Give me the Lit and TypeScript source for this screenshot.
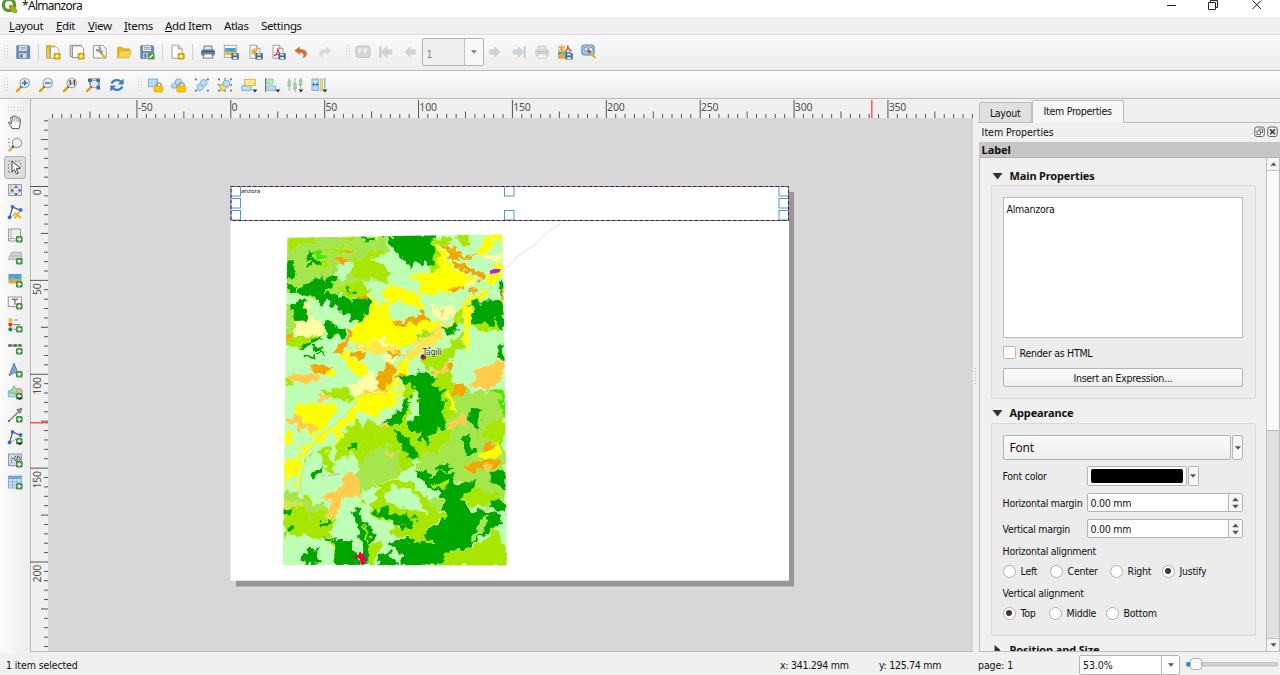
import { LitElement, html, svg, css, type TemplateResult } from "lit";
import { customElement, property } from "lit/decorators.js";

const plus = svg`<rect x="9" y="9" width="6.6" height="6.6" rx="1.6" fill="#3f8f3f"/><path d="M12.3 10.4v3.8M10.4 12.3h3.8" stroke="#fff" stroke-width="1.5"/>`;
const star = svg`<rect x="8.6" y="9" width="7" height="6.6" rx="1.4" fill="#c9a400"/><path d="M12.1 10v4.6M9.8 12.3h4.6M10.6 10.8l3 3M13.6 10.8l-3 3" stroke="#fff7b0" stroke-width=".9"/>`;
const disk = svg`<rect x="8.4" y="9" width="7.4" height="6.6" rx="1.2" fill="#456a86"/><path d="M10.2 9.5h3.6v2h-3.6zM10.2 15v-2h3.8v2" fill="#d5e2ec"/>`;
const drop = svg`<path d="M11.4 12.6h5L13.9 15.6z" fill="#333"/>`;
const sheet = svg`<path d="M3 1.2h6.5L13 4.7v9.6H3z" fill="#fdfdfd" stroke="#8c8c8c" stroke-width=".8"/><path d="M9.3 1.3v3.6H13" fill="#ddd" stroke="#8c8c8c" stroke-width=".8"/>`;
const lens = svg`<path d="M6.4 9.6L2 14.2" stroke="#d9a514" stroke-width="2.4" stroke-linecap="round"/><path d="M7 9l-1.2 1.2" stroke="#333" stroke-width="2"/><circle cx="9.8" cy="6" r="4.7" fill="#e9edf0" stroke="#9a9fa5" stroke-width="1.1"/>`;
const floppy = svg`<path d="M1.8 1.8h12l.8.8v11.8H1.8z" fill="#6a90ba" stroke="#54759a" stroke-width=".8"/><rect x="4" y="2" width="8" height="5" fill="#dfe5ea"/><path d="M5 3.6h6M5 5.2h6" stroke="#8c959c" stroke-width=".8"/><rect x="4.2" y="9.2" width="7.6" height="5" fill="#ced6dd"/><rect x="5.4" y="10.2" width="2" height="3.4" fill="#47698f"/>`;
const lock = svg`<path d="M9 9.3V7.6a2.7 2.7 0 0 1 5.2 0v1.7" fill="none" stroke="#999" stroke-width="1.5"/><rect x="7" y="9" width="8.6" height="6" rx=".8" fill="#f5c800" stroke="#d6a800" stroke-width=".7"/>`;
const polyline = svg`<path d="M2.6 13.6L5.6 3l8 3.4" fill="none" stroke="#555" stroke-width="1.2"/><path d="M3.6 13l9-5" stroke="#777" stroke-dasharray="1.4 1"/><circle cx="2.5" cy="13.4" r="1.9" fill="#2a6fe0"/><circle cx="5.6" cy="2.8" r="1.9" fill="#2a6fe0"/><circle cx="13.6" cy="6" r="1.9" fill="#2a6fe0"/>`;
const corners = svg`<path d="M1 1.5h1.8v1.8H1zM13 1.500h1.8v1.8H13zM1 12.800h1.8v1.8H1zM13 12.800h1.8v1.8H13z" fill="#666"/>`;
const printer = (a: string, b: string) => svg`<path d="M4 2h8v5H4z" fill="#e4e4e4" stroke="${b}" stroke-width=".7"/><rect x="1" y="5.6" width="14" height="6.2" rx="2" fill="${a}"/><path d="M2.6 7.4h10.800" stroke="${b}"/><path d="M4 9.8h8l.8 4.4H3.2z" fill="#f4f4f4" stroke="${b}" stroke-width=".7"/>`;
const image = svg`<rect x="1.5" y="2" width="13" height="6" fill="#46a5e8"/><path d="M1.5 8l4-2.4 4 1.6 5-.8v5.200h-13z" fill="#cfae4e"/>`;

const icons: Record<string, TemplateResult | ReturnType<typeof svg>> = {
  save: floppy,
  newLayout: svg`<path d="M1.5 1.5h4.6v12.6H1.5z" fill="#edc84f" stroke="#bf9a20" stroke-width=".8"/><path d="M4 4h2M4 6.4h2M4 8.8h2" stroke="#8b6c10" stroke-width=".8"/><path d="M5.6 2.6h5.2L14 5.8v8.4H5.6z" fill="#fafafa" stroke="#999" stroke-width=".8"/><path d="M2 2.5h8" stroke="#dcb42e" stroke-width="2"/>${star}`,
  duplicate: svg`<path d="M1.2 1.4h11v11h-11z" fill="#ddd" stroke="#8c8c8c" stroke-width=".9"/><path d="M3.4 1.8h8.2l3 3v8.8H3.4z" fill="#fbfbfb" stroke="#858585" stroke-width=".9"/>${star}`,
  manager: svg`<path d="M1.4 1.6h9.8l3 3v9.4H1.4z" fill="#f6f6f6" stroke="#909090" stroke-width=".9"/><path d="M8 8l5.6 6" stroke="#dfb633" stroke-width="2.3"/><path d="M4 5.400c.4 1.600 1.600 2.400 3 2L9.600 9l1-1-1.800-2.400c.4-1.600-.6-2.600-2-2.800l.6 1.800L6 6z" fill="#aaa" stroke="#777" stroke-width=".7"/>`,
  folder: svg`<path d="M1.6 13.4V3.4h4.6l1.3 1.4h5.7v2" fill="#e2b220" stroke="#d1a010" stroke-width=".7"/><path d="M1.6 13.8L4 6.6h11.2L13 13.8z" fill="#f7d24c" stroke="#d9ab1c" stroke-width=".7"/>`,
  saveTemplate: svg`${floppy}<rect x="8.8" y="9" width="6.8" height="6.6" rx="1.2" fill="#4a9a55"/><path d="M10.4 14l3.6-3.6" stroke="#e6f5e6" stroke-width="1.4"/>`,
  addPage: svg`${sheet}${star}`,
  print: printer("#5f7f9f", "#47586a"),
  exportImage: svg`<g><rect x="1.300" y="1.300" width="12.400" height="12" fill="#fafafa" stroke="#999" stroke-width=".8"/><rect x="2.200" y="4" width="10.600" height="4" fill="#46a0dd"/><path d="M2.200 8.500l3-2 3 1.500 4.600-.8v4H2.200z" fill="#e0bb3e"/></g>${disk}`,
  exportSvg: svg`${sheet}<path d="M7.500 4v7.400M4.300 5.800l6.400 3.800M10.700 5.800l-6.400 3.800" stroke="#f29a1f" stroke-width="1.4"/>${disk}`,
  exportPdf: svg`${sheet}<path d="M3.6 12c3-1.400 4.600-4 4.200-8 .2 4 1.600 6 4.600 6.200-3-.6-6 .2-8.800 1.800z" fill="none" stroke="#e0322c" stroke-width="1.100"/>${disk}`,
  undo: svg`<path d="M1.500 6.600L6.800 2.400v2.800c5 0 7.400 2 7 5-.3 2.400-2.400 3.600-4.600 4 2.200-2 2-5.600-2.400-5.800v2.600z" fill="#e2672b"/>`,
  redo: svg`<path d="M14.500 6.600L9.200 2.400v2.800c-5 0-7.400 2-7 5 .3 2.400 2.400 3.600 4.600 4-2.200-2-2-5.600 2.400-5.800v2.600z" fill="#dadcdc"/>`,
  atlas: svg`<rect x="1" y="2" width="14" height="11.600" rx="2.600" fill="#d6d6d6" stroke="#c2c2c2"/><path d="M3 5l3-1.200 1 2-2 2.400v2.600L3.400 8zM8 5l3-1.200 2 1.600-1.600 2-1 3.600-1.600-3z" fill="#f0f0f0"/>`,
  first: svg`<path d="M1.500 2.500h1.500v11H1.500zM3.400 8l5.400-5.400v3.400h5v4h-5v3.400z" fill="#cfd3d5" stroke="#cfd3d5"/>`,
  prev: svg`<path d="M2.600 8l6-5.400v3.200h4.800v4.400H8.600v3.200z" fill="#cfd3d5" stroke="#cfd3d5" stroke-width=".6"/>`,
  next: svg`<path d="M13.400 8l-6-5.400v3.200H2.600v4.400h4.800v3.200z" fill="#cfd3d5" stroke="#cfd3d5" stroke-width=".6"/>`,
  last: svg`<path d="M14.500 2.500H13v11h1.500zM12.600 8L7.200 2.600v3.400h-5v4h5v3.400z" fill="#cfd3d5" stroke="#cfd3d5"/>`,
  printOff: printer("#d0d2d3", "#c2c4c5"),
  exportAtlas: svg`<rect x="1" y="7.600" width="13" height="6.600" fill="#49a0dd"/><path d="M1 11l5-2 8 2v3.600H1z" fill="#d6ad35"/><path d="M4.600 1v7M1.400 2.400l6.400 4.400M7.800 2.400L1.400 6.800" stroke="#f6a01e" stroke-width="1.500"/><path d="M8 8c2-1.600 3-4 2.600-6.600.4 3 1.400 4.800 4 5.400" fill="none" stroke="#ea4630" stroke-width="1.300"/>${disk}`,
  atlasSettings: svg`<rect x=".8" y="1" width="12.400" height="10" rx="2" fill="#a9c2e0" stroke="#6c87aa"/><path d="M3 4l2.600-.8 1 2-1.600 2.600zM8 4l3-.6.6 2-2 2.600z" fill="#fff" stroke="#54789c" stroke-width=".6"/><path d="M9 8l5.400 6" stroke="#dcb43a" stroke-width="2.400"/><path d="M6.600 6.400l2.800 2.400" stroke="#555" stroke-width="1.600"/>`,
  zoomIn: svg`${lens}<path d="M9.800 3.200v5.600M7 6h5.600" stroke="#356fb0" stroke-width="1.500"/>`,
  zoomOut: svg`${lens}<path d="M7 6h5.600" stroke="#356fb0" stroke-width="1.500"/>`,
  zoomActual: svg`${lens}<path d="M7.200 4.200l1-.5v4.600M11.400 4.200l1-.5v4.600M9.900 4.800v.8M9.900 6.600v.8" stroke="#333" fill="none" stroke-width="1.100"/>`,
  zoomFull: svg`${lens}<path d="M3 1.500h3.800v3.600H3zM11.400 1.500H15v3.600h-3.600zM11.400 8.800H15v3.600h-3.600z" fill="#3d6fa8"/><path d="M6 3.200h6M13.200 4v6M5 4v4" stroke="#3d6fa8" stroke-width=".8"/>`,
  refresh: svg`<path d="M2.600 6.600C4 2.800 9.400 1.800 12 4.800" fill="none" stroke="#3c7cc4" stroke-width="2.200"/><path d="M14.600 1.400v6H8.800z" fill="#3c7cc4"/><path d="M13.400 9.400C12 13.200 6.600 14.200 4 11.200" fill="none" stroke="#3c7cc4" stroke-width="2.200"/><path d="M1.400 14.600v-6h5.800z" fill="#3c7cc4"/>`,
  lock: svg`<rect x="1.500" y="2" width="9" height="7.600" fill="#b9dbf5" stroke="#7db0d6"/>${lock}`,
  unlock: svg`<path d="M1.500 8l3-3 2 3v3H2z" fill="#b9dbf5" stroke="#7db0d6"/><circle cx="8.500" cy="5" r="3.200" fill="#b9dbf5" stroke="#7db0d6"/>${lock}`,
  group: svg`<path d="M3 8.600L6 6.400l4 4-2.600 3H4z" fill="#b9dbf5" stroke="#7db0d6"/><circle cx="9.800" cy="5.800" r="3.300" fill="#b9dbf5" stroke="#7db0d6"/>${corners}`,
  ungroup: svg`<path d="M3 8.600L6 6.400l4 4-2.600 3H4z" fill="#f4e66c" stroke="#b9a622"/><circle cx="9.400" cy="6.600" r="3.500" fill="#b9dbf5" stroke="#7db0d6"/>${corners}<path d="M8 1v1.600M1 8h1.600M13.400 8h1.600M8 13.200v1.600" stroke="#666" stroke-width="1.400"/>`,
  raise: svg`<rect x="1" y="8.600" width="9" height="5" fill="#b9dbf5" stroke="#7db0d6"/><rect x="3.600" y="2.400" width="10.600" height="6.200" fill="#f6ea85" stroke="#cdbd5c"/>${drop}`,
  align: svg`<path d="M1.500 1v14" stroke="#777"/><rect x="2.600" y="2" width="6.400" height="5" fill="#b6efb8" stroke="#85c888" stroke-width=".8"/><rect x="2.600" y="9" width="9" height="4.400" fill="#b9dbf5" stroke="#7db0d6" stroke-width=".8"/>${drop}`,
  distribute: svg`<path d="M2.200 1v13M8 1v14M13.600 1v11" stroke="#8a9a8f" stroke-width=".8"/><path d="M1 4h2.400v5H1zM6.800 6.500h2.400v5.500H6.800zM12.400 3h2.400v5h-2.400z" fill="#a8e2b0" stroke="#74b87f" stroke-width=".7"/>${drop}`,
  resize: svg`<rect x="1" y="2" width="6.400" height="11.400" fill="#b9dbf5" stroke="#7db0d6"/><path d="M1.600 7.600h5.600M2.600 6v3.200M6.200 6v3.200" stroke="#2c6da3" stroke-width=".9"/><rect x="9.200" y="2" width="2.400" height="11.400" fill="#f4e66c" stroke="#cdbd5c" stroke-width=".8"/><path d="M13.800 1v11" stroke="#7db0d6" stroke-width="1.300"/>${drop}`,
  pan: svg`<path d="M5 14.600c-.4-2-3-4.400-3.600-6.200 1-.8 2 .2 3 1.600L3.800 3.600c1-.8 1.700-.2 2 .8V2.200c.8-1 1.800-.6 2 .4 1-.8 1.800-.2 2 .8.9-.6 1.800 0 1.900 1 1.100-.4 1.700.4 1.700 1.400-.1 3-.5 6-1.400 8.800z" fill="#fff" stroke="#444" stroke-width=".9"/><path d="M5.800 4.400v3.400M7.900 3v4.600M9.900 4v3.800M11.700 5v3" stroke="#666" stroke-width=".7"/>`,
  zoom: svg`<path d="M1 2h3M1 5.500h3M1.500 9h2" stroke="#888" stroke-width="1.200" stroke-dasharray="1.400 1.200" fill="none"/><path d="M6 9.800L1.800 14.200" stroke="#dfa52c" stroke-width="2.200"/><path d="M6.600 9L5.400 10.400" stroke="#222" stroke-width="2.200"/><circle cx="10" cy="5.800" r="4.600" fill="#eee" stroke="#999" stroke-width="1.100"/>`,
  select: svg`<path d="M1.500 2h4M1.500 5v8M8 2h6M13.600 4v6M2 13.600h4" stroke="#888" stroke-dasharray="1.600 1.600" fill="none"/><path d="M5 2l8.200 7.400-4 .4 2 4.400-1.800.8-2-4.400L5 13z" fill="#fff" stroke="#333" stroke-width=".9"/>`,
  moveContent: svg`<path d="M1.500 2.500h13v11h-13z" fill="#e6e6e6" stroke="#999"/><path d="M4 2v10" stroke="#aaa"/><path d="M9 3l2.200 2.800H6.800zM9 14l2.200-2.800H6.800zM3.600 8.500l2.800-2.200v4.400zM14.400 8.500l-2.800-2.200v4.400z" fill="#3c6da4"/>`,
  editNodes: svg`${polyline}<path d="M7 9l7 5" stroke="#f1b400" stroke-width="2"/><path d="M12 8.500l-4.500 6" stroke="#f1b400" stroke-width="1.600"/>`,
  addMap: svg`<path d="M1.500 2h12v12h-12z" fill="#eee" stroke="#9a9a9a"/><path d="M4 2v9.600H1.800M4 11.600h9" fill="none" stroke="#aaa"/>${plus}`,
  add3d: svg`<path d="M4.600 3.500c3-1.600 6 1 9.400-.6L15 11.400c-4 1-8.600-1.800-13.800-.8z" fill="#d8d8d8" stroke="#a5a5a5" stroke-width=".8"/><path d="M3.400 7h10.800M7.200 3.400L6 10.600M11 3.600v8" stroke="#b4b4b4" stroke-width=".8"/>${plus}`,
  addImage: svg`${image}${plus}`,
  addLabel: svg`<rect x="1.300" y="3" width="13.200" height="9.600" fill="#f4f4f4" stroke="#9a9a9a"/><path d="M5 5.400h5.800M7.900 5.400v5.400" stroke="#666" stroke-width="1.200"/>${plus}`,
  addLegend: svg`<circle cx="3.400" cy="3" r="2.100" fill="#ffc400"/><circle cx="3.400" cy="7.600" r="2.100" fill="#e83c2a"/><circle cx="3.400" cy="12.400" r="2.100" fill="#1f8c4c"/><path d="M6.800 3h4M6.800 7.600h6.800M6.800 12.400h3" stroke="#888" stroke-width="1.200"/>${plus}`,
  addScale: svg`<path d="M1 6.500h14" stroke="#a0a0a0" stroke-width="2.800"/><path d="M1.600 6.500H4.400M7 6.500h2.600M12 6.500h2.200" stroke="#555" stroke-width="1.800"/>${plus}`,
  addNorth: svg`<path d="M7 1.200l5 12.400-4.600-3L2 13.800z" fill="#79a8d0" stroke="#3e6d98" stroke-width=".8"/>${plus}`,
  addShape: svg`<rect x="1.400" y="6.800" width="8" height="6" fill="#b9dbf5" stroke="#7db0d6"/><circle cx="11.600" cy="8" r="3.600" fill="#f5b4aa" stroke="#d87467" stroke-width=".9"/><path d="M7 1.800l4.600 7.400H2.600z" fill="#a7e0a4" stroke="#6fb874" stroke-width=".9"/>${plus}<path d="M10 13.600h5.600l-2.800 2.400z" fill="#222"/>`,
  addArrow: svg`<path d="M2 14L12.400 4" stroke="#777" stroke-width="1.200"/><path d="M14.800 1.200l-1.600 5.200-3.400-3.600z" fill="#999" stroke="#555" stroke-width=".7"/><circle cx="2" cy="14" r="1" fill="#444"/>${plus}`,
  addNode: svg`${polyline}${plus}<path d="M10 13.600h5.600l-2.800 2.400z" fill="#222"/>`,
  addHtml: svg`<rect x="1.500" y="2" width="13" height="11.600" fill="#cfd8e2" stroke="#8997a8"/><path d="M4.500 4.500v7M4 6.500h4" stroke="#8fa1b6"/><path d="M8.800 4L7 6.600l1.800 2.600M11.600 4l1.800 2.600-1.800 2.600M10.800 3.600L9.400 9.800" fill="none" stroke="#444" stroke-width=".9"/>${plus}`,
  addTable: svg`<rect x="1.500" y="2" width="13" height="12" fill="#d0e3f5" stroke="#83afd6"/><path d="M1.500 2h13v3h-13z" fill="#6fa5da"/><path d="M1.500 8h13M1.500 11h13M5.600 5v9M10 5v9" stroke="#83afd6" stroke-width=".9"/>${plus}`,
};

@customElement("tool-icon")
export class ToolIcon extends LitElement {
  @property() name = "";
  static styles = css`
    :host { display: flex; width: 16px; height: 16px; flex: none; }
    svg { width: 16px; height: 16px; display: block; overflow: visible; }
  `;
  render() {
    return html`<svg viewBox="0 0 16 16">${icons[this.name] ?? ""}</svg>`;
  }
}

type Patch = [string, string];
const DARK = "#00a600", LEAF = "#a6e600", GRASS = "#a6e64d", MINT = "#bfffb5", SUN = "#ffff00";
const ORANGE = "#f2a600", SAND = "#ffcc4d", CREAM = "#ffffa6", AMBER = "#ffe64d", LIME = "#4de600", ROSE = "#e6004d";

/* Land-cover patches, in the map's own 750 x 1050 grid. */
const patches: Patch[] = [
  [GRASS, "40,30 348,30 358,75 305,100 322,160 245,190 205,215 130,225 95,205 40,200"],
  [GRASS, "45,225 75,250 78,330 45,330"],
  [LEAF, "55,38 135,36 138,46 100,62 75,68 58,84"],
  [LEAF, "210,36 275,34 270,44 240,52 212,46"],
  [LEAF, "245,108 300,82 345,75 350,128 368,152 345,175 310,160 275,165 245,140"],
  [LEAF, "150,70 240,68 235,85 190,85"],
  [LEAF, "120,105 175,112 178,130 115,125"],
  [LEAF, "195,190 255,165 300,190 295,215 230,225"],
  [MINT, "305,100 350,85 380,80 400,130 370,155 345,120"],
  [MINT, "210,120 245,112 245,140 215,170 195,150"],
  [DARK, "345,30 498,25 495,125 470,125 462,105 450,120 430,118 417,132 405,100 375,82 362,62"],
  [DARK, "272,35 315,33 315,46 275,46"],
  [SUN, "312,36 328,36 325,48"],
  [LIME, "118,84 145,78 175,98 150,106"],
  [ORANGE, "180,100 205,95 240,95 240,110 210,118 200,106"],
  [ORANGE, "220,72 245,76 240,90 222,84"],
  [DARK, "50,105 74,122 80,162 48,165"],
  [DARK, "104,100 120,74 136,88 126,98 152,112 138,124 120,124 108,115 130,112"],
  [DARK, "90,185 130,175 150,150 162,168 190,142 205,155 180,185 165,200 190,208 250,228 295,220 299,262 260,285 240,290 235,265 200,258 180,232 150,232 130,212 100,208 85,200"],
  [DARK, "55,178 85,190 80,205 55,200"],
  [DARK, "68,237 112,225 108,260 122,290 100,300 75,290"],
  [CREAM, "72,296 112,285 104,235 118,228 118,265 150,295 165,320 145,338 100,332 78,322"],
  [DARK, "163,285 195,290 200,310 230,320 215,340 185,335 165,322"],
  [DARK, "238,190 262,195 265,206 240,208"],
  [ORANGE, "258,215 280,212 292,202 296,218 285,230 262,224"],
  [LEAF, "48,332 130,336 160,330 100,365 48,362"],
  [ORANGE, "46,330 70,325 60,348 46,352"],
  [DARK, "80,374 110,352 155,333 162,340 130,356 110,370"],
  [DARK, "128,366 155,360 162,378 140,380"],
  [DARK, "90,392 165,380 170,390 130,393 98,402"],
  [SUN, "243,335 250,295 270,280 300,265 302,215 335,236 357,228 334,195 370,180 415,198 455,215 457,250 420,240 375,225 360,235 358,270 390,300 450,290 520,290 500,310 480,317 440,322 440,345 405,370 350,360 330,355 280,358 250,350"],
  [SUN, "415,145 500,142 500,65 530,80 545,120 590,150 625,178 580,185 545,200 495,207 450,197 440,170"],
  [LEAF, "488,38 545,34 540,60 500,68 505,140 480,140 492,110"],
  [LEAF, "560,30 602,30 592,60 565,52"],
  [ORANGE, "518,62 548,66 550,85 600,92 618,90 602,98 548,98 565,112 625,142 655,150 640,163 600,150 560,125 540,95"],
  [SUN, "640,30 700,26 692,55 668,50 660,75 640,92 618,95 640,60"],
  [CREAM, "635,90 700,80 700,110 680,108 640,105"],
  [SUN, "690,105 700,140 665,180 650,215 600,235 580,262 560,255 600,215 655,195 658,150"],
  [ORANGE, "536,192 575,178 578,186 548,202"],
  [CREAM, "583,170 610,165 618,178 590,182"],
  [ORANGE, "596,188 620,190 618,204 598,202"],
  [ORANGE, "360,278 385,290 410,285 435,268 450,258 480,275 482,290 440,290 400,306 375,298"],
  [CREAM, "480,242 560,238 550,270 520,285 490,268"],
  [SAND, "503,245 525,250 515,270"],
  [AMBER, "440,345 490,310 540,290 570,245 590,250 560,290 500,355 430,400 395,440 380,430"],
  [DARK, "600,232 692,222 703,235 704,320 685,320 680,310 650,300 630,315 605,300"],
  [DARK, "685,180 702,160 704,222 692,212"],
  [LEAF, "605,300 640,290 660,310 685,280 680,320 640,318"],
  [LEAF, "560,250 590,262 595,300 578,352 540,400 525,440 500,440 515,380 545,330"],
  [MINT, "590,262 600,300 565,335 530,370 500,372 545,330 575,290"],
  [SUN, "582,262 600,240 604,300 600,350 582,380 582,320"],
  [DARK, "510,306 540,300 560,290 562,315 540,328 525,315"],
  [LEAF, "436,330 470,316 490,330 445,345"],
  [DARK, "675,375 704,345 706,408 690,402"],
  [ORANGE, "695,200 704,180 704,260"],
  [ORANGE, "188,390 215,350 240,318 250,322 232,362 210,392"],
  [CREAM, "312,345 340,342 370,362 330,368"],
  [AMBER, "255,358 330,355 380,370 400,390 340,388 260,372"],
  [ORANGE, "242,375 290,382 282,405 250,400"],
  [ORANGE, "342,378 370,376 400,388 365,390"],
  [CREAM, "335,398 380,388 362,425 340,418"],
  [AMBER, "215,400 270,405 300,450 290,455 250,422"],
  [SUN, "210,390 240,372 242,395 285,420 292,450 262,455 232,430"],
  [ORANGE, "118,420 190,426 182,442 150,450 128,436"],
  [SUN, "165,450 185,432 200,440 175,468"],
  [SAND, "58,446 130,442 160,460 110,472 70,468"],
  [LEAF, "46,455 70,460 72,475 46,475"],
  [LEAF, "150,500 200,485 240,500 260,530 190,520"],
  [CREAM, "222,485 262,478 292,442 320,450 318,500 258,506"],
  [ORANGE, "322,460 345,420 375,422 355,500 325,502"],
  [SAND, "280,498 350,496 345,512 285,512"],
  [SUN, "236,560 262,515 350,506 372,440 415,395 425,415 385,468 368,515 372,545 335,560 300,580 275,550"],
  [ORANGE, "378,452 395,440 412,445 400,465 378,468"],
  [LEAF, "450,400 500,370 545,400 510,445 470,430"],
  [SAND, "480,440 540,420 550,410 530,445 490,450"],
  [LEAF, "400,545 395,480 540,440 560,500 700,495 705,840 560,760 440,700 380,760 300,780 240,660 350,590"],
  [GRASS, "545,495 705,500 706,845 640,850 560,760 430,740 460,690 510,610 560,560"],
  [MINT, "545,420 600,390 600,320 640,315 660,350 680,400 610,440 600,480 560,470"],
  [DARK, "395,460 440,440 480,440 500,462 485,480 525,495 520,545 515,570 535,600 530,622 490,620 468,665 448,640 458,620 420,625 410,605 430,580 445,570 430,545 450,520 430,480 400,480"],
  [ORANGE, "535,425 550,405 545,440 535,450"],
  [ORANGE, "545,480 580,475 585,505 550,508"],
  [SAND, "590,485 640,420 705,405 705,455 660,490 610,480"],
  [LIME, "650,488 690,492 705,510 690,512"],
  [LIME, "688,510 705,510 708,580 695,570"],
  [SUN, "530,500 545,515 560,560 545,560"],
  [SAND, "130,515 185,508 180,520 150,528"],
  [SUN, "85,538 150,528 198,535 202,560 172,595 127,636 95,605 65,585"],
  [SAND, "50,582 78,568 95,590 150,600 130,622 88,612"],
  [SUN, "270,505 405,500 362,545 335,545 325,570 300,565 280,548 262,560"],
  [SUN, "225,580 260,535 275,545 240,595 150,650 110,670 95,720 85,790 98,815 75,775 95,700 88,670 150,630"],
  [SUN, "195,620 210,620 210,690 202,685"],
  [SUN, "42,625 72,620 62,660 45,672"],
  [SUN, "42,708 90,695 85,745 50,765 45,795 40,790"],
  [DARK, "332,595 365,580 375,555 395,545 408,510 428,525 402,570 388,600 350,600"],
  [MINT, "425,505 445,505 440,570 415,600 420,560"],
  [DARK, "370,610 395,620 445,685 432,715 400,680 380,640"],
  [SAND, "325,602 350,600 365,608 340,614"],
  [LEAF, "215,630 265,575 275,600 320,585 330,620 280,655 265,700 240,690 195,705"],
  [LEAF, "150,670 180,660 175,690 200,725 180,750 150,710"],
  [LEAF, "110,700 140,672 120,702"],
  [DARK, "235,660 255,658 265,675 240,680"],
  [DARK, "125,745 155,722 160,752 135,755"],
  [GRASS, "265,725 290,690 345,660 385,680 390,740 340,770 300,790 262,800"],
  [SAND, "345,680 370,680 360,700"],
  ["#c8c8c8", "170,750 200,740 202,750 180,760"],
  [DARK, "590,555 640,550 625,620 600,590"],
  [SAND, "530,600 560,570 588,575 580,600 545,602"],
  [DARK, "575,645 600,630 595,655 618,685 590,700"],
  [LEAF, "470,650 540,600 545,630 500,690 470,680"],
  [LEAF, "640,600 705,570 705,670 640,640"],
  [ORANGE, "640,660 670,658 672,672 645,675"],
  [SUN, "625,685 690,665 690,690 640,705"],
  [ORANGE, "570,735 610,710 690,695 698,720 640,735 585,740"],
  [SAND, "640,720 662,715 660,750"],
  [DARK, "655,750 705,725 708,790 665,770"],
  [DARK, "440,745 470,735 480,760 500,740 550,745 560,780 620,760 610,790 570,820 580,830 610,860 680,860 700,900 650,925 600,965 545,980 500,1022 350,1022 350,945 430,945 455,925 520,890 525,830 500,800 470,790"],
  [DARK, "490,725 545,725 540,740 500,738"],
  [LEAF, "485,775 530,775 530,790 490,785"],
  [DARK, "630,808 680,810 706,845 705,870 650,830"],
  [LEAF, "570,825 600,790 690,800 640,850 600,840"],
  [GRASS, "600,945 640,870 655,870 640,920 610,950"],
  [LEAF, "500,1022 540,982 600,968 650,940 675,905 700,945 712,985 712,1025"],
  [MINT, "680,905 710,880 712,955"],
  [LEAF, "330,770 430,770 525,880 460,920 490,960 420,945 340,920 300,850"],
  [GRASS, "470,815 525,820 520,860 480,850"],
  [MINT, "340,800 380,785 430,800 470,865 400,850 350,830"],
  [LEAF, "38,825 100,815 170,850 200,880 185,935 100,950 40,935"],
  [GRASS, "40,795 85,800 90,830 40,825"],
  ["#d0e64d", "40,825 105,835 100,850 40,845"],
  [GRASS, "100,830 165,835 180,855 115,860"],
  [DARK, "40,850 65,850 60,868 40,868"],
  [DARK, "42,908 75,902 65,922 45,928"],
  [SAND, "148,815 215,785 218,760 240,745 265,750 270,810 215,830 185,880 170,885 185,835"],
  [MINT, "215,830 265,820 300,790 330,790 300,830 310,880 380,900 350,940 400,1000 385,1020 200,940 185,930 190,880"],
  [LEAF, "268,825 285,820 290,845 270,840"],
  [DARK, "310,860 345,848 370,865 410,865 440,890 420,912 380,900 350,885"],
  [DARK, "250,850 268,855 280,890 300,900 320,930 300,960 305,1022 275,1000 270,940"],
  [DARK, "155,885 175,885 178,900 160,900"],
  [DARK, "185,945 245,945 275,1022 205,1022"],
  [LEAF, "175,950 195,955 200,1022 190,1010"],
  [MINT, "38,930 110,935 190,960 200,1022 38,1022"],
  [DARK, "80,1010 120,965 145,970 140,995 155,1018 100,1022"],
  [DARK, "145,937 190,940 180,950"],
  [LEAF, "278,900 290,905 300,955 335,950 320,1000 310,1022 298,1015 300,960"],
  [DARK, "330,985 360,980 375,1022 320,1022"],
];

const U = 1.8775;
const X0 = 230.8;
const Y0 = 186.5;

@customElement("layout-canvas")
export class LayoutCanvas extends LitElement {
  static styles = css`
    :host { display: block; flex: none; width: 944px; height: 555px; }
    svg { display: block; }
    .num { font: 10.5px "Noto Sans", sans-serif; fill: #505050; letter-spacing: -.2px; }
    .tiny { font: 6px "Noto Sans", sans-serif; fill: #222; }
    .town { font: 8px "DejaVu Sans", sans-serif; fill: #444; stroke: #fff; stroke-width: 1.2px; paint-order: stroke; stroke-opacity: .6; }
  `;

  private rulers() {
    const out = [];
    for (let v = -95; v <= 395; v += 5) {
      const x = X0 + v * U;
      if (x < 50 || x > 973) continue;
      const y = v % 50 === 0 ? 100 : v % 25 === 0 ? 111.5 : 114;
      out.push(svg`<path d="M${x} ${y}V118" stroke="#555"/>`);
      if (v % 50 === 0) out.push(svg`<text class="num" x="${x + 0.8}" y="110.5">${v}</text>`);
    }
    for (let v = -35; v <= 245; v += 5) {
      const y = Y0 + v * U;
      if (y < 119 || y > 650) continue;
      const x = v % 50 === 0 ? 30 : v % 25 === 0 ? 41 : 44;
      out.push(svg`<path d="M${x} ${y}H48" stroke="#555"/>`);
      if (v % 50 === 0) out.push(svg`<text class="num" text-anchor="end" transform="translate(40.5 ${y + 3}) rotate(-90)">${v}</text>`);
    }
    return out;
  }

  render() {
    const boxes = [[231, 186.5], [231, 198.5], [231, 210.5], [504.5, 186.5], [504.5, 210.5], [779, 186.5], [779, 198.5], [779, 210.5]];
    return html`<svg width="944" height="555" viewBox="30 99 944 555">
      <defs>
        <clipPath id="extent"><path d="M52 38L698 28L706 540L711 1022L38 1020L45 540z"/></clipPath>
        <filter id="ragged" x="0" y="0" width="100%" height="100%" color-interpolation-filters="sRGB">
          <feTurbulence type="fractalNoise" baseFrequency=".042" numOctaves="2" seed="7"/>
          <feDisplacementMap in="SourceGraphic" scale="40" xChannelSelector="R" yChannelSelector="G"/>
        </filter>
      </defs>
      <rect x="30" y="99" width="944" height="555" fill="#f0f0f0"/>
      <rect x="48" y="118" width="925" height="533" fill="#d7d7d7"/>
      <path d="M30 651.5H973" stroke="#bbb"/>
      <path d="M30.5 99V652" stroke="#b8b8b8"/>
      ${this.rulers()}
      <path d="M871.8 100V118M30 422.7H48" stroke="#ff4f4f" stroke-width="1.4"/>
      <rect x="236" y="192" width="558" height="394.5" fill="#969696"/>
      <rect x="230.500" y="186" width="558.5" height="394.7" fill="#fff"/>
      <g transform="translate(270 225) scale(.33333)">
        <g clip-path="url(#extent)">
          <g filter="url(#ragged)">
            <rect x="0" y="0" width="750" height="1050" fill="${MINT}"/>
            ${patches.map(([fill, points]) => svg`<polygon points="${points}" fill="${fill}" stroke="#e4f5a8" stroke-opacity=".45" stroke-width="1.5"/>`)}
          </g>
        </g>
        <path d="M700 135L665 150L660 195L595 232L555 280L500 310L420 370L385 420L360 495L340 507L270 512L240 560L160 625L108 690L90 780L122 890" fill="none" stroke="#c3d6a0" stroke-opacity=".8" stroke-width="2.400"/>
        <path d="M660 137l12-5 20 0-4 10-14 3-14 2z" fill="#b01eff"/>
        <circle cx="460" cy="396" r="8" fill="#c21a48"/><circle cx="459" cy="394" r="4" fill="#333"/><path d="M476 366h5v5h-5z" fill="${ROSE}"/>
        <path d="M250 995l14-4 6-12 6 8 6-4 2 14 8 8-6 4-4-4 2 14h-12l-2-14-6-8-12 4z" fill="${ROSE}"/>
      </g>
      <path d="M502 271L507 267.5L520 254L532 247L538 242L547 232L561 223.5" fill="none" stroke="#cfe3f2" stroke-width="1"/>
      <text class="town" x="422.5" y="355" textLength="19" lengthAdjust="spacingAndGlyphs">Tagili</text>
      <text class="tiny" x="241" y="193" textLength="19" lengthAdjust="spacingAndGlyphs">anzora</text>
      <rect x="231" y="186.5" width="557.5" height="34" fill="none" stroke="#4c9bd0"/>
      ${boxes.map(([x, y]) => svg`<rect x="${x}" y="${y}" width="9.5" height="9.5" fill="#fff" stroke="#4c9bd0"/>`)}
      <path d="M231 186.5H788.5V220.5H231z" fill="none" stroke="#7e0a38" stroke-dasharray="3.5 2"/>
    </svg>`;
  }
}

@customElement("app-root")
export class AppRoot extends LitElement {
  static styles = css`
    :host { display: flex; flex-direction: column; width: 1280px; height: 675px; overflow: hidden; background: #f0f0f0; color: #111; font: 10.5px "DejaVu Sans Condensed", "DejaVu Sans", sans-serif; font-stretch: condensed; letter-spacing: -.28px; }
    * { box-sizing: border-box; }
    .title { height: 17px; flex: none; background: #fff; display: flex; align-items: flex-start; }
    .logo { width: 17px; height: 17px; margin: -3px 0 0 1px; }
    .name { font: 12px/14px "Noto Sans", sans-serif; margin: -1px 0 0 4px; letter-spacing: -.7px; }
    .win { margin-left: auto; width: 114px; height: 14px; }
    .menu { height: 18px; flex: none; display: flex; align-items: center; padding-left: 9px; border-bottom: 1px solid #dcdcdc; }
    .menu span { white-space: nowrap; flex: none; font: 11.5px/16px "Noto Sans", sans-serif; letter-spacing: -.38px; }
    .menu u { text-underline-offset: 1px; }
    .bar { flex: none; display: flex; align-items: center; background: linear-gradient(#fbfbfb, #ededed); border-bottom: 1px solid #bcbcbc; padding-left: 3px; }
    .one { height: 36px; padding-bottom: 1px; }
    .two { height: 28px; }
    .cell { width: 23.4px; flex: none; display: flex; justify-content: center; }
    .sep { width: 7px; flex: none; height: 16px; display: flex; justify-content: center; }
    .sep::before { content: ""; width: 1px; background: #d2d2d2; }
    .grip { width: 6px; height: 16px; flex: none; background-image: radial-gradient(circle, #c4c4c4 .8px, transparent 1px); background-size: 3px 3px; }
    .gap { width: 2.3px; flex: none; }
    .pad { width: 9px; flex: none; }
    .pagebox { width: 62px; height: 28px; flex: none; display: flex; border: 1px solid #b4b4b4; border-radius: 2px; background: #efefef; color: #888; align-items: stretch; }
    .pagebox .v { flex: 1; padding: 9px 0 0 4px; line-height: 12px; }
    .pagebox .d { width: 19px; border-left: 1px solid #b4b4b4; background: #fafafa; display: flex; align-items: center; justify-content: center; opacity: .75; }
    .body { flex: 1; display: flex; min-height: 0; }
    .side { width: 30px; flex: none; background: linear-gradient(90deg, #fbfbfb, #ededed); display: flex; flex-direction: column; align-items: center; padding-top: 7px; }
    .sgrip { width: 17px; height: 5px; flex: none; background-image: radial-gradient(circle, #c4c4c4 .8px, transparent 1px); background-size: 3px 3px; }
    .scell { height: 22.5px; width: 22px; display: flex; align-items: center; justify-content: center; flex: none; border-radius: 3px; }
    .scell.on { background: #dcdcdc; border: 1px solid #b0b0b0; }
    .split { width: 3.6px; flex: none; display: flex; align-items: center; }
    .panel { flex: 1; display: flex; flex-direction: column; min-width: 0; height: 553px; overflow: hidden; }
    .tabs { height: 24px; flex: none; display: flex; align-items: flex-end; border-bottom: 1px solid #bdbdbd; padding: 0 0 0 1px; }
    .tab { display: flex; align-items: center; justify-content: center; border: 1px solid #bdbdbd; border-bottom: 0; border-radius: 2px 2px 0 0; white-space: nowrap; }
    .tab.a { width: 53px; height: 20px; background: #e0e0e0; }
    .tab.b { width: 92px; height: 23px; margin-bottom: -1px; background: #f6f6f6; padding-bottom: 2px; }
    .dock { height: 19px; flex: none; display: flex; align-items: center; padding: 0 2px 1px 4px; letter-spacing: 0; }
    .dock svg { margin-left: auto; }
    .band { height: 16px; flex: none; margin-left: 1px; background: #c6c6c6; border-bottom: 1px solid #b4b4b4; padding-left: 3px; font: 700 11px/15px "Noto Sans", sans-serif; letter-spacing: -.1px; }
    .scroll { flex: 1; min-height: 0; display: flex; margin-left: 1px; border-left: 1px solid #bdbdbd; border-bottom: 1px solid #bdbdbd; }
    .form { flex: 1; min-width: 0; overflow: hidden; padding: 9px 10px 0 11px; }
    .head { display: flex; align-items: center; height: 18px; font: 700 11px "Noto Sans", sans-serif; letter-spacing: -.15px; padding: 0 0 2px 1px; gap: 7px; }
    .head svg { margin-top: 2px; flex: none; }
    .box { border: 1px solid #d9d9d9; border-radius: 2px; background: #ececec; padding: 11px 12px 0 11px; }
    .box.m { height: 214px; margin-bottom: 5px; }
    .box.p { height: 213px; margin: 1px 0 5px; }
    .text { height: 141px; border: 1px solid #bcbcbc; background: #fff; padding: 3px 3px; line-height: 16px; }
    .check { display: flex; align-items: center; height: 15px; margin-top: 7px; gap: 4px; }
    .tick { width: 13px; height: 13px; border: 1px solid #b8b8b8; background: #fff; border-radius: 2px; }
    .btn { height: 19px; margin-top: 8px; border: 1px solid #b4b4b4; border-radius: 2px; background: linear-gradient(#fcfcfc, #eee); display: flex; align-items: center; justify-content: center; }
    .row { display: flex; align-items: center; }
    .fontrow { height: 25px; gap: 1px; }
    .fb { flex: 1; height: 25px; border: 1px solid #b4b4b4; border-radius: 2px; background: linear-gradient(#fcfcfc, #eee); display: flex; align-items: center; padding-left: 6px; font: 12px "Noto Sans", sans-serif; }
    .arr { width: 11px; height: 100%; border: 1px solid #b4b4b4; border-radius: 2px; background: #f6f6f6; display: flex; align-items: center; justify-content: center; }
    .lab { width: 84px; flex: none; white-space: nowrap; }
    .crow { height: 20px; margin-top: 6px; }
    .col { width: 100px; height: 20px; border: 1px solid #b4b4b4; border-radius: 2px; background: #f8f8f8; padding: 2px 3px; margin-right: 1px; }
    .ink { height: 14px; width: 92px; border-radius: 2px; background: #000; }
    .srow { height: 19px; margin-top: 7px; }
    .spin { flex: 1; height: 19px; border: 1px solid #b4b4b4; border-radius: 2px; background: #fff; display: flex; align-items: center; padding-left: 3px; }
    .steps { margin-left: auto; width: 14px; height: 17px; border-left: 1px solid #b4b4b4; background: #f6f6f6; display: flex; align-items: center; justify-content: center; }
    .cap { height: 16px; line-height: 16px; }
    .h { margin-top: 5px; }
    .vv { margin-top: 6px; }
    .rad { height: 16px; display: flex; align-items: center; margin-top: 4px; }
    .dot { width: 13px; height: 13px; border-radius: 50%; border: 1px solid #b0b0b0; background: #fff; flex: none; display: flex; align-items: center; justify-content: center; }
    .dot.on::before { content: ""; width: 6px; height: 6px; border-radius: 50%; background: #3a3a3a; }
    .rad span { flex: none; white-space: nowrap; padding-left: 5px; }
    .vbar { width: 14px; flex: none; border-left: 1px solid #bdbdbd; border-right: 1px solid #bdbdbd; display: flex; flex-direction: column; background: #e0e0e0; }
    .vend { height: 13px; flex: none; display: flex; align-items: center; justify-content: center; background: #f4f4f4; border-bottom: 1px solid #c4c4c4; }
    .thumb { height: 260px; background: #fafafa; border-bottom: 1px solid #bbb; }
    .vend.l { margin-top: auto; border-top: 1px solid #c4c4c4; border-bottom: 0; }
    .status { height: 22px; flex: none; display: flex; align-items: center; padding: 1px 0 0 6px; white-space: nowrap; letter-spacing: -.1px; }
    .s1 { width: 774px; } .s2 { width: 99px; } .s3 { width: 99px; } .s4 { width: 101px; }
    .s2, .s3 { letter-spacing: -.28px; }
    .zoom { width: 101px; height: 20px; border: 1px solid #b4b4b4; border-radius: 2px; background: #fff; display: flex; align-items: center; padding-left: 3px; margin-right: 6px; }
    .zoom div { margin-left: auto; width: 18px; height: 18px; border-left: 1px solid #b4b4b4; display: flex; align-items: center; justify-content: center; }
  `;

  private cells(names: string) {
    return names.split(" ").map((n) =>
      n === "|" ? html`<div class="sep"></div>` : html`<div class="cell"><tool-icon name=${n}></tool-icon></div>`);
  }

  private down(w = 6) {
    return html`<svg width=${w} height="4" viewBox="0 0 6 4"><path d="M0 .3h6L3 3.7z" fill="#555"/></svg>`;
  }

  private steps() {
    return html`<div class="steps"><svg width="7" height="12" viewBox="0 0 6 11"><path d="M0 4L3 .5L6 4zM0 7h6L3 10.5z" fill="#555"/></svg></div>`;
  }

  private radio(label: string, on: boolean, width: number) {
    return html`<i class="dot ${on ? "on" : ""}"></i><span style="width:${width}px">${label}</span>`;
  }

  private menus: [string, string, number][] = [["L", "ayout", 47], ["E", "dit", 32], ["V", "iew", 36], ["I", "tems", 41], ["A", "dd Item", 59], ["", "Atlas", 37], ["", "Settings", 60]];

  render() {
    const side = "pan zoom select moveContent editNodes addMap add3d addImage addLabel addLegend addScale addNorth addShape addArrow addNode addHtml addTable".split(" ");
    const open = html`<svg width="11" height="8" viewBox="0 0 10 8"><path d="M0 1h10L5 7.5z" fill="#333"/></svg>`;
    return html`
      <div class="title">
        <svg class="logo" viewBox="0 0 17 17"><circle cx="8" cy="8" r="5.6" fill="none" stroke="#589632" stroke-width="3.4"/><path d="M8 8h3.4l4.600 4.600V16h-3.400L8 11.400z" fill="#93b023"/><path d="M8 8l3 0-.2 2.600L8 11z" fill="#ee7913"/></svg>
        <div class="name">*Almanzora</div>
        <svg class="win" viewBox="1166 0 114 14"><path d="M1167 5.5h9M1208.5 2.5h7v7h-7zM1210.5 2.5v-2h7v7h-2M1252.5 .5l8.5 8.5M1261 .5l-8.5 8.5" fill="none" stroke="#222"/></svg>
      </div>
      <div class="menu">
        ${this.menus.map(([k, rest, w]) => html`<span style="width:${w}px"><u>${k}</u>${rest}</span>`)}
      </div>
      <div class="bar one">
        <div class="grip"></div><div class="gap"></div>
        ${this.cells("save | newLayout duplicate manager folder saveTemplate | addPage | print exportImage exportSvg exportPdf undo redo")}
        <div class="pad"></div><div class="grip"></div>
        ${this.cells("atlas first prev")}
        <div class="pagebox"><div class="v">1</div><div class="d">${this.down(8)}</div></div>
        ${this.cells("next last printOff exportAtlas atlasSettings")}
      </div>
      <div class="bar two">
        <div class="grip"></div><div class="gap"></div>
        ${this.cells("zoomIn zoomOut zoomActual zoomFull refresh")}
        <div class="pad"></div><div class="grip"></div>
        ${this.cells("lock unlock group ungroup raise align distribute resize")}
      </div>
      <div class="body">
        <div class="side"><div class="sgrip"></div>
          ${side.map((n) => html`<div class="scell ${n === "select" ? "on" : ""}"><tool-icon name=${n}></tool-icon></div>`)}
        </div>
        <layout-canvas></layout-canvas>
        <div class="split"><svg width="4" height="16"><path d="M1.5 0v16" stroke="#bbb" stroke-dasharray="1 2"/></svg></div>
        <div class="panel">
          <div class="tabs"><div class="tab a">Layout</div><div class="tab b">Item Properties</div></div>
          <div class="dock">Item Properties
            <svg width="24" height="12" viewBox="0 0 24 12"><g fill="none" stroke="#666"><rect x=".8" y="1" width="9.5" height="9.5" rx="2"/><rect x="13.7" y="1" width="9.5" height="9.5" rx="2"/><rect x="3" y="5" width="3.5" height="3.5" stroke-width=".9"/><path d="M5 4.8V3h3.500v3.500H6.600" stroke-width=".9"/><path d="M16 3.3l5 5M21 3.3l-5 5" stroke="#333" stroke-width="1.6"/></g></svg>
          </div>
          <div class="band">Label</div>
          <div class="scroll">
            <div class="form">
              <div class="head">${open}Main Properties</div>
              <div class="box m">
                <div class="text">Almanzora</div>
                <div class="check"><i class="tick"></i>Render as HTML</div>
                <div class="btn">Insert an Expression...</div>
              </div>
              <div class="head">${open}Appearance</div>
              <div class="box p">
                <div class="row fontrow"><div class="fb">Font</div><div class="arr">${this.down()}</div></div>
                <div class="row crow"><div class="lab">Font color</div><div class="col"><div class="ink"></div></div><div class="arr">${this.down()}</div></div>
                <div class="row srow"><div class="lab">Horizontal margin</div><div class="spin">0.00 mm${this.steps()}</div></div>
                <div class="row srow"><div class="lab">Vertical margin</div><div class="spin">0.00 mm${this.steps()}</div></div>
                <div class="cap h">Horizontal alignment</div>
                <div class="rad">${this.radio("Left", false, 34)}${this.radio("Center", false, 47)}${this.radio("Right", false, 39)}${this.radio("Justify", true, 40)}</div>
                <div class="cap vv">Vertical alignment</div>
                <div class="rad">${this.radio("Top", true, 33)}${this.radio("Middle", false, 44)}${this.radio("Bottom", false, 50)}</div>
              </div>
              <div class="head"><svg width="11" height="10" viewBox="0 0 10 10"><path d="M2 0v10L8 5z" fill="#333"/></svg>Position and Size</div>
            </div>
            <div class="vbar">
              <div class="vend"><svg width="7" height="4" viewBox="0 0 6 4"><path d="M0 3.7h6L3 .3z" fill="#555"/></svg></div>
              <div class="thumb"></div>
              <div class="vend l">${this.down(7)}</div>
            </div>
          </div>
        </div>
      </div>
      <div class="status">
        <div class="s1">1 item selected</div><div class="s2">x: 341.294 mm</div><div class="s3">y: 125.74 mm</div><div class="s4">page: 1</div>
        <div class="zoom">53.0%<div>${this.down(8)}</div></div>
        <svg width="94" height="16" viewBox="0 0 94 16"><rect x="0" y="5.5" width="92" height="3.5" rx="1.7" fill="#d0d0d0" stroke="#b0b0b0" stroke-width=".6"/><rect x="0" y="5" width="8" height="4.5" rx="2" fill="#2a8dd8"/><rect x="4.5" y="1.5" width="11" height="11" rx="3" fill="#fafafa" stroke="#aaa"/></svg>
      </div>`;
  }
}
